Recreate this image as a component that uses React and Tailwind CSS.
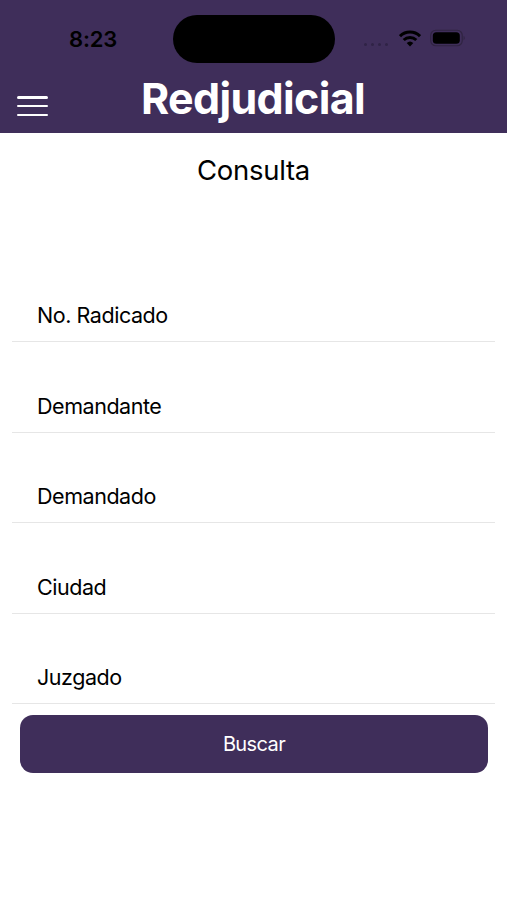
const fields = ["No. Radicado", "Demandante", "Demandado", "Ciudad", "Juzgado"];

function StatusBar() {
  return (
    <div className="flex h-[78px] items-start">
      <div className="w-[173px] pl-[69px] pt-[25px] text-[22px] leading-[28px] font-semibold tracking-[-0.2px] text-black">
        8:23
      </div>
      <div className="mt-[15px] h-12 w-[162px] rounded-full bg-black" />
      <div className="flex items-center pt-[29px] pl-[29px]">
        <div className="mt-[12px] flex gap-[4px]">
          {[0, 1, 2, 3].map((i) => (
            <span key={i} className="h-[3px] w-[3px] rounded-full bg-[#302346]" />
          ))}
        </div>
        <svg className="ml-[11px] h-[17px] w-[22px]" viewBox="0 0 22 17" fill="none" stroke="#000" strokeWidth="3">
          <path d="M1 6.2a14.3 14.3 0 0 1 20 0" />
          <path d="M4.7 10a9 9 0 0 1 12.6 0" />
          <path d="M11 16.5l-3.3-3.4a4.8 4.8 0 0 1 6.6 0z" fill="#000" stroke="none" />
        </svg>
        <svg className="ml-[9px] h-[18px] w-[36px]" viewBox="0 0 36 18">
          <rect x="0.75" y="1.25" width="31.5" height="15.5" rx="5" fill="none" stroke="#302442" strokeWidth="1.2" />
          <rect x="2.8" y="3.3" width="27" height="11.4" rx="3.5" fill="#000" />
          <path d="M33.6 6.8v4.4c1.6-.8 1.6-3.6 0-4.4z" fill="#302442" />
        </svg>
      </div>
    </div>
  );
}

export default function App() {
  return (
    <div className="h-[900px] w-[507px] overflow-hidden bg-white font-['Inter',sans-serif] text-black">
      <header className="h-[133.4px] bg-[#3f2e5a]">
        <StatusBar />
        <div className="flex">
          <button className="mt-[18px] ml-[17px] flex h-[20px] w-[31px] flex-col justify-between">
            <span className="h-[2.5px] w-full rounded-full bg-white" />
            <span className="h-[2.5px] w-full rounded-full bg-white" />
            <span className="h-[2.5px] w-full rounded-full bg-white" />
          </button>
          <h1 className="-mt-0.5 ml-[93px] text-[43px] leading-[44px] font-bold tracking-[-0.65px] text-white">
            Redjudicial
          </h1>
        </div>
      </header>

      <h2 className="pt-[19.6px] text-center text-[27.5px] leading-[34px] tracking-[-0.3px]">Consulta</h2>

      <form className="mt-[64.6px] px-3">
        {fields.map((field) => (
          <div key={field} className="flex h-[90.5px] items-end border-b border-[#e6e6e6] pb-[12px] pl-[25px]">
            <label className="text-[21.5px] leading-[28px] tracking-[-0.45px]">{field}</label>
          </div>
        ))}
        <button className="mx-2 mt-[11px] h-[57.5px] w-[468px] rounded-[13px] bg-[#3f2e5a] text-[20px] tracking-[-0.6px] text-white">
          Buscar
        </button>
      </form>
    </div>
  );
}
